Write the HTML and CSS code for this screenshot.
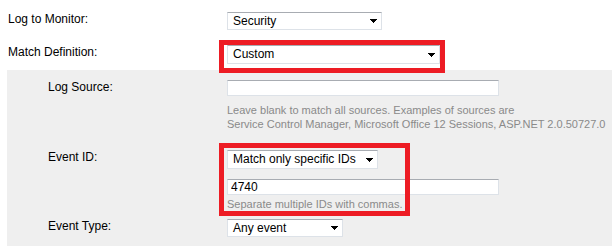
FILE: index.html
```html
<!DOCTYPE html>
<html lang="en">
<head>
    <meta charset="UTF-8">
    <title>Event Log Monitor</title>
    <link rel="stylesheet" href="styles.css">
</head>
<body>

    <div class="form">
        <!-- Top level settings -->
        <div class="row top">
            <label class="label">Log to Monitor:</label>
            <div class="field">
                <div class="select select-log">
                    <span>Security</span>
                    <svg class="caret" width="7" height="4" viewBox="0 0 7 4"><polygon points="0,0 7,0 3.5,4"/></svg>
                </div>
            </div>
        </div>

        <div class="row top row-match">
            <label class="label">Match Definition:</label>
            <div class="field marked mark-match">
                <div class="select select-match">
                    <span>Custom</span>
                    <svg class="caret" width="7" height="4" viewBox="0 0 7 4"><polygon points="0,0 7,0 3.5,4"/></svg>
                </div>
            </div>
        </div>

        <!-- Custom definition panel -->
        <div class="panel">
            <div class="row">
                <label class="label">Log Source:</label>
                <div class="field">
                    <input type="text" class="text-input" value="">
                    <p class="help">Leave blank to match all sources. Examples of sources are<br>Service Control Manager, Microsoft Office 12 Sessions, ASP.NET 2.0.50727.0</p>
                </div>
            </div>

            <div class="row row-event">
                <label class="label">Event ID:</label>
                <div class="field marked mark-event">
                    <div class="select select-ids">
                        <span>Match only specific IDs</span>
                        <svg class="caret" width="7" height="4" viewBox="0 0 7 4"><polygon points="0,0 7,0 3.5,4"/></svg>
                    </div>
                    <input type="text" class="text-input ids-input" value="4740">
                    <p class="help help-tight">Separate multiple IDs with commas.</p>
                </div>
            </div>

            <div class="row row-type">
                <label class="label">Event Type:</label>
                <div class="field">
                    <div class="select select-type">
                        <span>Any event</span>
                        <svg class="caret" width="7" height="4" viewBox="0 0 7 4"><polygon points="0,0 7,0 3.5,4"/></svg>
                    </div>
                </div>
            </div>
        </div>
    </div>

</body>
</html>
```

FILE: styles.css
```css
body {
    margin: 0;
    font-family: 'Liberation Sans', Arial, sans-serif;
    font-size: 12px;
    color: #000;
    background-color: #fff;
}
.form {
    padding-top: 12px;
}
.row {
    display: flex;
    align-items: flex-start;
}
.row.top {
    padding-left: 8px;
}
.row.top .label {
    width: 219px;
}
.row-match {
    margin-top: 15px;
}
.label {
    display: block;
    line-height: 14px;
    flex-shrink: 0;
}
.field {
    display: flex;
    flex-direction: column;
    align-items: flex-start;
}

/* Fake dropdowns */
.select {
    box-sizing: border-box;
    height: 19px;
    display: flex;
    align-items: center;
    justify-content: space-between;
    padding: 0 4px 0 5px;
    background-color: #fff;
    border: 1px solid #dde2e8;
    border-top-color: #a8acb2;
    line-height: 17px;
}
.select-log { width: 155px; height: 18px; }
.select-match { width: 213px; }
.select-ids { width: 151px; }
.select-type { width: 116px; height: 18px; }
.caret {
    display: block;
    fill: #000;
    shape-rendering: crispEdges;
}

.text-input {
    box-sizing: border-box;
    width: 272px;
    height: 16px;
    margin: 0;
    padding: 0 3px;
    font-family: inherit;
    font-size: 12px;
    line-height: 14px;
    background-color: #fff;
    border: 1px solid #dde2e8;
    border-top-color: #a8acb2;
    outline: none;
}
.help {
    margin: 7px 0 0 0;
    font-size: 11px;
    line-height: 14px;
    color: #8a8a8a;
    white-space: nowrap;
}
.help.help-tight {
    margin-top: 2px;
}

/* Grey panel for the custom definition */
.panel {
    margin: 6px 0 0 7px;
    padding: 10px 0 10px 41px;
    background-color: #efefef;
}
.panel .label {
    width: 179px;
}
.row-event {
    margin-top: 19px;
}
.ids-input {
    margin-top: 10px;
}
.row-type {
    margin-top: 8px;
}

/* Red highlight boxes drawn over the form */
.marked {
    position: relative;
}
.marked::after {
    content: '';
    position: absolute;
    box-sizing: border-box;
    border: 5px solid #ed1c24;
    pointer-events: none;
}
.mark-match::after {
    left: -8px;
    top: -5px;
    width: 226px;
    height: 33px;
}
.mark-event::after {
    left: -8px;
    top: -7px;
    width: 191px;
    height: 73px;
}
```
